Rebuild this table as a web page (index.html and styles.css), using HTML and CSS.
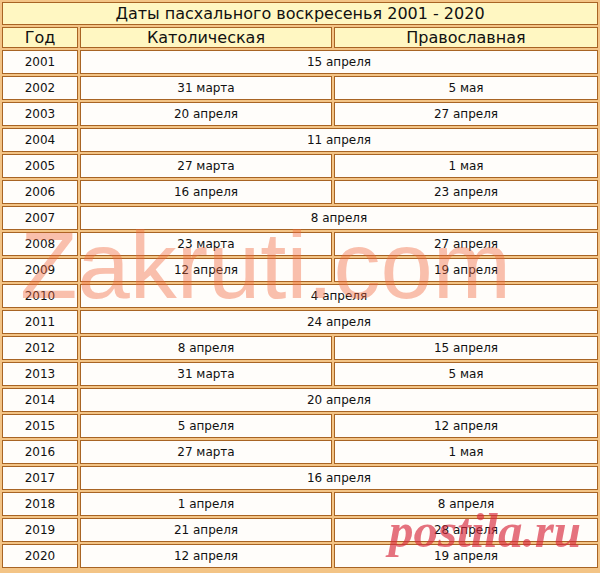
FILE: index.html
```html
<!DOCTYPE html>
<html lang="ru">
<head>
<meta charset="utf-8">
<title>Даты пасхального воскресенья 2001 - 2020</title>
<link rel="stylesheet" href="styles.css">
</head>
<body>
<div class="wrap">
<table class="easter">
  <colgroup><col class="c-year"><col class="c-cat"><col class="c-orth"></colgroup>
  <tr class="title"><th colspan="3">Даты пасхального воскресенья 2001 - 2020</th></tr>
  <tr class="head"><th>Год</th><th>Католическая</th><th>Православная</th></tr>
  <tr><td>2001</td><td colspan="2">15 апреля</td></tr>
  <tr><td>2002</td><td>31 марта</td><td>5 мая</td></tr>
  <tr><td>2003</td><td>20 апреля</td><td>27 апреля</td></tr>
  <tr><td>2004</td><td colspan="2">11 апреля</td></tr>
  <tr><td>2005</td><td>27 марта</td><td>1 мая</td></tr>
  <tr><td>2006</td><td>16 апреля</td><td>23 апреля</td></tr>
  <tr><td>2007</td><td colspan="2">8 апреля</td></tr>
  <tr><td>2008</td><td>23 марта</td><td>27 апреля</td></tr>
  <tr><td>2009</td><td>12 апреля</td><td>19 апреля</td></tr>
  <tr><td>2010</td><td colspan="2">4 апреля</td></tr>
  <tr><td>2011</td><td colspan="2">24 апреля</td></tr>
  <tr><td>2012</td><td>8 апреля</td><td>15 апреля</td></tr>
  <tr><td>2013</td><td>31 марта</td><td>5 мая</td></tr>
  <tr><td>2014</td><td colspan="2">20 апреля</td></tr>
  <tr><td>2015</td><td>5 апреля</td><td>12 апреля</td></tr>
  <tr><td>2016</td><td>27 марта</td><td>1 мая</td></tr>
  <tr><td>2017</td><td colspan="2">16 апреля</td></tr>
  <tr><td>2018</td><td>1 апреля</td><td>8 апреля</td></tr>
  <tr><td>2019</td><td>21 апреля</td><td>28 апреля</td></tr>
  <tr><td>2020</td><td>12 апреля</td><td>19 апреля</td></tr>
</table>
<div class="wm wm-zakruti">Zakruti.com</div>
<div class="wm wm-postila">postila.ru</div>
</div>
</body>
</html>
```
FILE: styles.css
```css
html, body {
  margin: 0;
  padding: 0;
  background: #f3c486;
}
.wrap {
  position: relative;
  width: 600px;
  height: 573px;
  overflow: hidden;
}
.easter {
  width: 600px;
  border-collapse: separate;
  border-spacing: 2px;
  background: #f3c486;
  font-family: "DejaVu Sans", Verdana, sans-serif;
  color: #111;
  table-layout: fixed;
}
.c-year { width: 76px; }
.c-cat { width: 252px; }
.c-orth { width: 264px; }
.easter th, .easter td {
  border: 1px solid #a86424;
  padding: 0;
  text-align: center;
  font-weight: normal;
}
.easter th {
  background: #fff7c2;
  font-size: 16px;
}
.title th { height: 21px; }
.head th { height: 19px; }
.easter td {
  background: #fffdfa;
  font-size: 12px;
  height: 22px;
}
.wm {
  position: absolute;
  pointer-events: none;
  white-space: nowrap;
  line-height: 1;
}
.wm-zakruti {
  left: 20px;
  top: 219px;
  font-family: "Liberation Sans", Arial, sans-serif;
  font-size: 94px;
  color: rgba(240, 105, 65, 0.42);
}
.wm-postila {
  left: 389px;
  top: 506px;
  font-family: "Liberation Serif", "Times New Roman", serif;
  font-weight: bold;
  font-style: italic;
  font-size: 49px;
  color: rgba(215, 40, 60, 0.65);
}
```
